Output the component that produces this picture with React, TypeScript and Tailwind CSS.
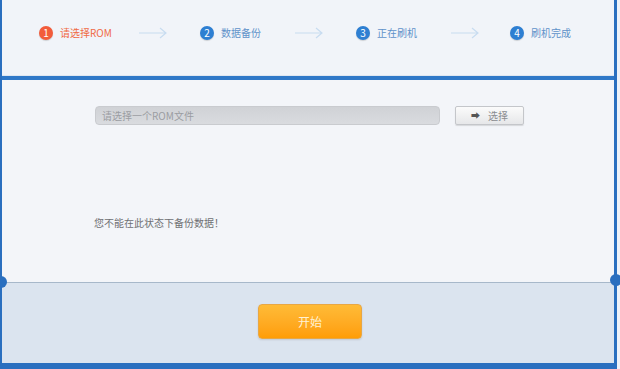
import React from 'react';

const font = { fontFamily: '"Microsoft YaHei", "Noto Sans CJK SC", "Liberation Sans", sans-serif' };

type Step = { n: number; label: string; textW: string; gapAfter: string; active?: boolean; last?: boolean };

const steps: Step[] = [
  { n: 1, label: '请选择ROM', textW: 'w-[79px]', gapAfter: 'mr-[33px]', active: true },
  { n: 2, label: '数据备份', textW: 'w-[74px]', gapAfter: 'mr-[33px]' },
  { n: 3, label: '正在刷机', textW: 'w-[74px]', gapAfter: 'mr-[31px]' },
  { n: 4, label: '刷机完成', textW: 'w-[70px]', gapAfter: '', last: true },
];

function Arrow() {
  return (
    <svg width="28" height="12" viewBox="0 0 28 12" className="shrink-0">
      <path d="M0 6 H27 M21 1 L27 6 L21 11" fill="none" stroke="#c8dcf0" strokeWidth="1.2" />
    </svg>
  );
}

function StepItem({ step }: { step: Step }) {
  return (
    <div className={`flex items-center ${step.gapAfter}`}>
      <div
        className={`w-[14px] h-[14px] rounded-full flex items-center justify-center text-[10px] leading-none text-white shrink-0 shadow-[0_1px_1px_rgba(0,0,0,0.15)] ${
          step.active ? 'bg-[#f25c3b]' : 'bg-[#2e7fd2]'
        }`}
      >
        {step.n}
      </div>
      <div
        className={`ml-[7px] ${step.textW} text-[10px] leading-none ${step.active ? 'text-[#f06a45]' : 'text-[#5f92c9]'}`}
      >
        {step.label}
      </div>
      {!step.last && <Arrow />}
    </div>
  );
}

export default function App() {
  return (
    <div className="relative w-[620px] h-[369px] flex bg-[#2a6fbf] overflow-hidden" style={font}>
      <div className="w-[614px] h-full flex flex-col border-l-2 border-[#2a6fbf]">
        {/* steps */}
        <div className="h-[76px] bg-[#f1f4f9] border-b border-[#dfe7f1] flex items-center pl-[37px] pb-[10px]">
          {steps.map((s) => (
            <StepItem key={s.n} step={s} />
          ))}
        </div>
        <div className="h-[4px] bg-[#2f78c8]" />

        {/* rom picker */}
        <div className="h-[202px] bg-[#f3f5f9] pt-[26px] pl-[93px] flex flex-col">
          <div className="flex items-center">
            <div className="w-[345px] h-[19px] rounded-[4px] bg-gradient-to-b from-[#d0d2d6] to-[#d9dbdf] border border-[#c9cbcf] flex items-center pl-[6px] text-[10px] text-[#9b9da2]">
              请选择一个ROM文件
            </div>
            <button className="ml-[15px] w-[69px] h-[19px] rounded-[2px] bg-gradient-to-b from-[#fbfbfb] to-[#e6e7e9] border border-[#c4c6ca] shadow-[0_1px_1px_rgba(0,0,0,0.12)] flex items-center justify-center gap-[8px] text-[10px] text-[#8a8c90]">
              <span className="text-[#555] text-[9px] leading-none">➡</span>
              <span>选择</span>
            </button>
          </div>
          <div className="mt-[90px] -ml-px text-[10px] text-[#6f7073]">您不能在此状态下备份数据！</div>
        </div>
        <div className="h-px bg-[#a7b8ca]" />

        {/* start */}
        <div className="h-[80px] bg-[#dbe4ef] pt-[21px] pl-[256px]">
          <button className="w-[104px] h-[35px] rounded-[4px] bg-gradient-to-b from-[#ffbb36] to-[#ff9d04] border border-[#e8a744] shadow-[0_1px_2px_rgba(0,0,0,0.12)] text-[12px] text-[#fff2d4]">
            开始
          </button>
        </div>
        <div className="flex-1 bg-[#2a6fbf]" />
      </div>
      <div className="w-[3px] h-full bg-[#2a6fbf]" />
      <div className="w-[3px] h-full bg-[#eef2f8]" />

      {/* edge knobs */}
      <div className="absolute left-[-5px] top-[276px] w-[12px] h-[12px] rounded-full bg-[#2a6fbf]" />
      <div className="absolute left-[610px] top-[274px] w-[12px] h-[12px] rounded-full bg-[#2a6fbf]" />
    </div>
  );
}
